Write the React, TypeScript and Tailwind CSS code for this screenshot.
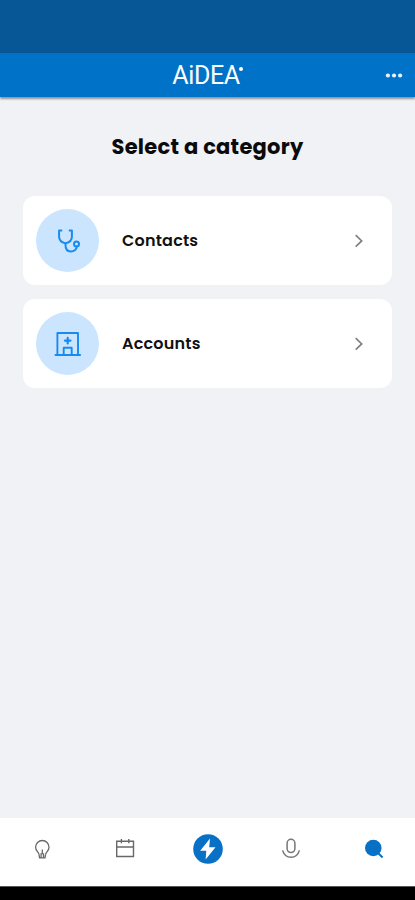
import type { ReactNode } from "react";

const StethoscopeIcon = () => (
  <svg width="28" height="28" viewBox="0 0 28 28" fill="none" stroke="#168bf2" strokeWidth="2" strokeLinecap="round" strokeLinejoin="round">
    <path d="M7.4 3.5H5.1v6.2c0 3.4 2.2 5.6 6.4 6.7 4.2-1.1 6.4-3.3 6.4-6.7V3.5h-2.3" />
    <path d="M11.5 16.4v1.7c0 3.9 2 6.4 5.2 6.4 3.6 0 6-2.3 6.1-5.1" />
    <circle cx="22.5" cy="16.9" r="2.5" />
  </svg>
);

const HospitalIcon = () => (
  <svg width="28" height="28" viewBox="0 0 28 28" fill="none" stroke="#168bf2" strokeWidth="1.9" strokeLinecap="round" strokeLinejoin="round">
    <path d="M1.5 25h24.6M3.4 25V3H24v22" />
    <path d="M13.7 7.8v5.6M10.9 10.6h5.6" strokeWidth="2.2" />
    <path d="M9.7 25v-7.3h8V25" />
  </svg>
);

const BulbIcon = () => (
  <svg width="24" height="24" viewBox="0 0 24 24" fill="none" stroke="#686868" strokeWidth="1.3" strokeLinejoin="round">
    <path d="M9 17.3c-.3-2.2-3.4-3.4-3.4-7.1a6.7 6.7 0 0 1 13.4 0c0 3.7-3.1 4.9-3.4 7.1" />
    <path d="M9 17.3l.6 3.5H15l.6-3.5M12.3 12.6v4.6M11.1 16.2v4.4M13.5 16.2v4.4" />
  </svg>
);

const CalendarIcon = () => (
  <svg width="24" height="24" viewBox="0 0 24 24" fill="none" stroke="#686868" strokeWidth="1.4">
    <path d="M3.7 4.3h16.8v15.2H3.7zM3.7 10h16.8M8.4 2v4.3M15.8 2v4.3" />
  </svg>
);

const BoltIcon = () => (
  <svg width="30" height="30" viewBox="0 0 30 30">
    <circle cx="15" cy="15" r="14.8" fill="#0871c6" />
    <path d="M17 4.5 7.2 16.7h6.1L12.6 25.5 22.5 13.2h-6.3Z" fill="#fff" />
  </svg>
);

const MicIcon = () => (
  <svg width="24" height="24" viewBox="0 0 24 24" fill="none" stroke="#777" strokeWidth="1.5">
    <rect x="8.1" y="2.3" width="7.8" height="13.2" rx="3.9" />
    <path d="M3.6 13.4c1.3 4.6 4.4 6.9 8.4 6.9s7.1-2.3 8.4-6.9" />
  </svg>
);

const SearchIcon = () => (
  <svg width="24" height="24" viewBox="0 0 24 24">
    <circle cx="11.3" cy="11" r="8.3" fill="#0871c6" />
    <path d="m15.7 15.7 4.9 4.8" stroke="#0871c6" strokeWidth="2" />
  </svg>
);

const CategoryCard = ({ label, icon }: { label: string; icon: ReactNode }) => (
  <button className="flex h-[89px] w-full items-center rounded-xl bg-white pl-[13px] pr-7 text-left">
    <span className="flex size-[63px] items-center justify-center rounded-full bg-[#cbe5fe]">{icon}</span>
    <span className="ml-[23px] text-[16px] font-semibold leading-6 tracking-[0.2px] text-[#111]">{label}</span>
    <svg className="ml-auto" width="10" height="14" viewBox="0 0 10 14" fill="none" stroke="#808080" strokeWidth="1.7">
      <path d="m1.7 1.2 6 5.7-6 5.7" />
    </svg>
  </button>
);

export default function App() {
  const tabs = [
    { name: "Ideas", icon: <BulbIcon /> },
    { name: "Calendar", icon: <CalendarIcon /> },
    { name: "Actions", icon: <BoltIcon /> },
    { name: "Voice", icon: <MicIcon /> },
    { name: "Search", icon: <SearchIcon /> },
  ];

  return (
    <div className="flex h-[900px] w-[415px] flex-col overflow-hidden bg-[#f0f2f6] font-['Poppins','Inter',sans-serif]">
      {/* Status bar */}
      <div className="h-[53px] shrink-0 bg-[#075796]" />

      {/* Header */}
      <header className="grid h-11 shrink-0 grid-cols-[1fr_auto_1fr] items-center bg-[#0073c8] shadow-[0_2px_2px_rgba(0,0,0,0.4)]">
        <span />
        <div className="flex items-start text-white">
          <span className="font-['Roboto',sans-serif] text-[25px] leading-[46px] tracking-[-0.4px]">AiDEA</span>
          <span className="-ml-px mt-[14px] size-1 rounded-full bg-white" />
        </div>
        <svg className="ml-auto mr-3" width="18" height="6" viewBox="0 0 18 6" fill="#e7f4ff">
          <circle cx="2.9" cy="2.5" r="2.1" />
          <circle cx="9" cy="2.5" r="2.1" />
          <circle cx="15.1" cy="2.5" r="2.1" />
        </svg>
      </header>

      <main className="flex-1 px-[23px] pt-[34px]">
        <h1 className="text-center text-[21px] font-bold leading-8 tracking-[0.25px] text-[#0b0b0c]">Select a category</h1>
        <div className="mt-[33px] flex flex-col gap-[14px]">
          <CategoryCard label="Contacts" icon={<StethoscopeIcon />} />
          <CategoryCard label="Accounts" icon={<HospitalIcon />} />
        </div>
      </main>

      {/* Bottom navigation */}
      <nav className="grid h-[68px] shrink-0 grid-cols-5 bg-white pb-[6px]">
        {tabs.map((tab) => (
          <button key={tab.name} aria-label={tab.name} className="flex items-center justify-center">
            {tab.icon}
          </button>
        ))}
      </nav>
      <div className="h-[14px] shrink-0 border-t border-[#555] bg-black" />
    </div>
  );
}
